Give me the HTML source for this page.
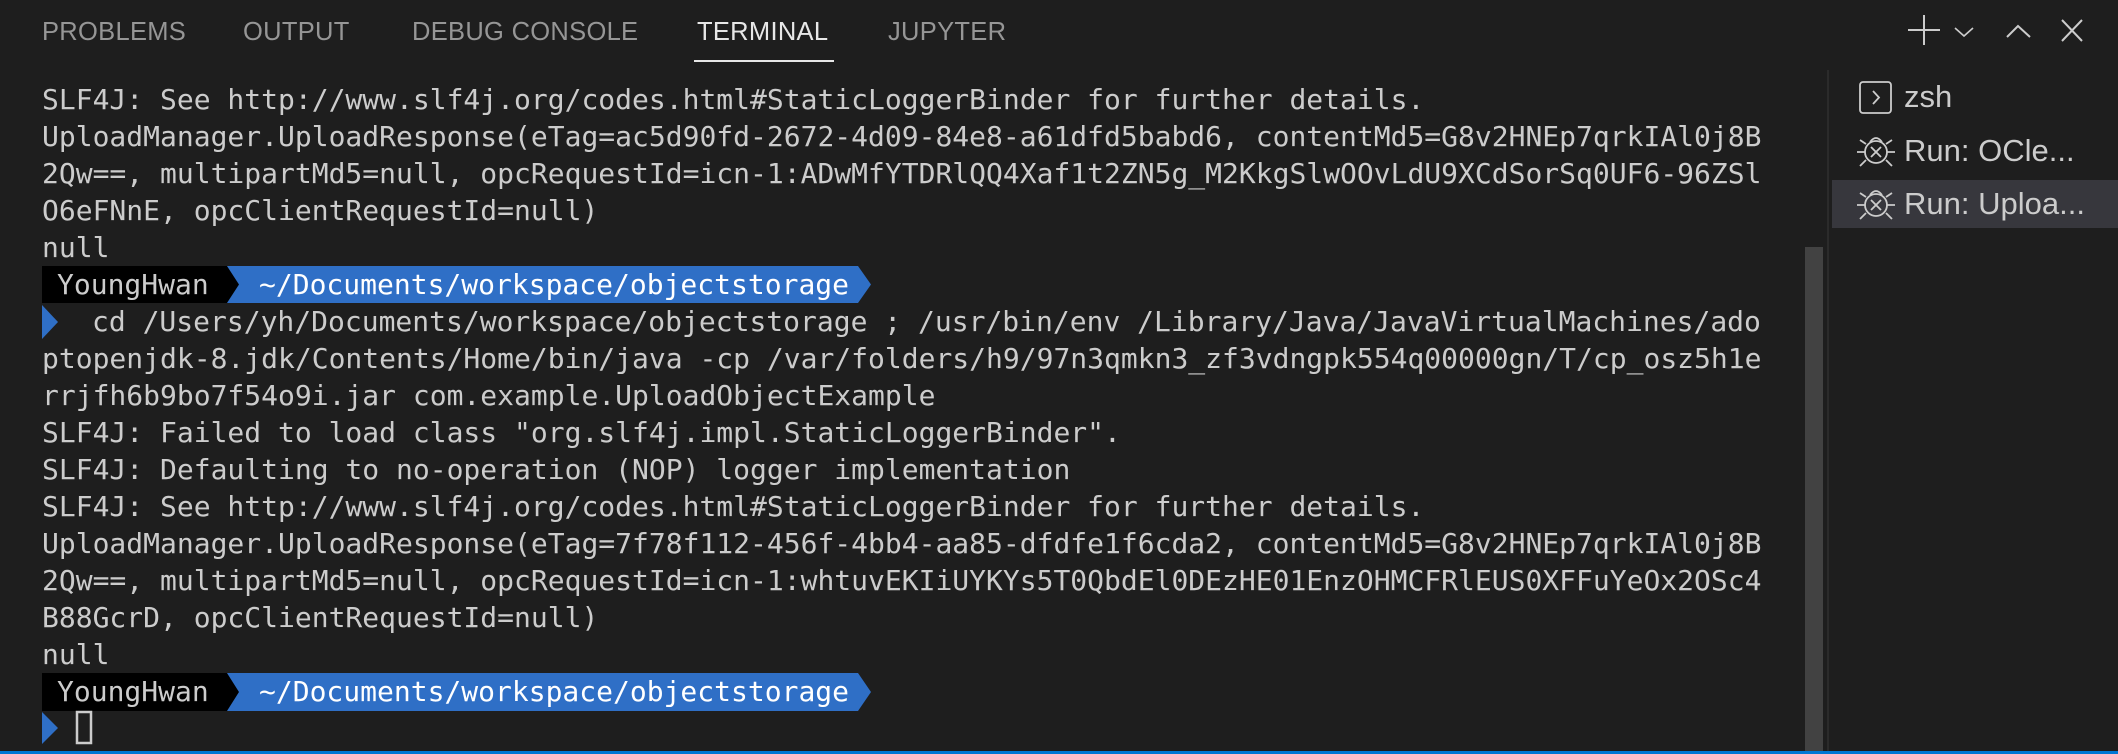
<!DOCTYPE html>
<html><head><meta charset="utf-8"><style>
body{margin:0;width:2118px;height:754px;background:#1e1e1e;overflow:hidden;position:relative;font-family:"Liberation Sans",sans-serif}
.tab{position:absolute;top:16px;font-size:25.5px;line-height:32px;color:#969696;letter-spacing:0.3px}
.ln{position:absolute;left:42px;white-space:pre;font-family:"DejaVu Sans Mono",monospace;font-size:28px;letter-spacing:0;color:#cccccc;line-height:37px;height:37px}
.side{position:absolute;left:1904px;font-size:31px;line-height:40px;color:#cccccc}
</style></head><body>
<div class="tab" style="left:42px">PROBLEMS</div>
<div class="tab" style="left:243px">OUTPUT</div>
<div class="tab" style="left:412px">DEBUG CONSOLE</div>
<div class="tab" style="left:697px;color:#e7e7e7">TERMINAL</div>
<div class="tab" style="left:888px">JUPYTER</div>
<div style="position:absolute;left:694px;top:60px;width:140px;height:2px;background:#e7e7e7"></div>

<svg style="position:absolute;left:1900px;top:10px" width="200" height="40" viewBox="1900 10 200 40" fill="none" stroke="#cccccc" stroke-width="2">
<path d="M1924 15V45M1908 30H1940"/>
<path d="M1955 28L1964 36L1973 28" stroke-width="1.6"/>
<path d="M2007 37L2018 26L2030 37"/>
<path d="M2062 20L2082 41M2082 20L2062 41"/>
</svg>

<div class="ln" style="top:81px">SLF4J: See http://www.slf4j.org/codes.html#StaticLoggerBinder for further details.</div>
<div class="ln" style="top:118px">UploadManager.UploadResponse(eTag=ac5d90fd-2672-4d09-84e8-a61dfd5babd6, contentMd5=G8v2HNEp7qrkIAl0j8B</div>
<div class="ln" style="top:155px">2Qw==, multipartMd5=null, opcRequestId=icn-1:ADwMfYTDRlQQ4Xaf1t2ZN5g_M2KkgSlwOOvLdU9XCdSorSq0UF6-96ZSl</div>
<div class="ln" style="top:192px">O6eFNnE, opcClientRequestId=null)</div>
<div class="ln" style="top:229px">null</div>

<svg style="position:absolute;left:42px;top:266px" width="840" height="37"><polygon points="0,0 185,0 197,18.5 185,37 0,37" fill="#000"/><polygon points="185,0 816,0 829,18.5 816,37 185,37 197,18.5" fill="#2f6fc6"/></svg>
<div class="ln" style="top:266px;left:57px">YoungHwan</div>
<div class="ln" style="top:266px;left:259px;color:#fff">~/Documents/workspace/objectstorage</div>

<svg style="position:absolute;left:42px;top:305px" width="18" height="34"><polygon points="0,0 16,17 0,34" fill="#2f6fc6"/></svg>
<div class="ln" style="top:303px;left:92px">cd /Users/yh/Documents/workspace/objectstorage ; /usr/bin/env /Library/Java/JavaVirtualMachines/ado</div>
<div class="ln" style="top:340px">ptopenjdk-8.jdk/Contents/Home/bin/java -cp /var/folders/h9/97n3qmkn3_zf3vdngpk554q00000gn/T/cp_osz5h1e</div>
<div class="ln" style="top:377px">rrjfh6b9bo7f54o9i.jar com.example.UploadObjectExample</div>
<div class="ln" style="top:414px">SLF4J: Failed to load class "org.slf4j.impl.StaticLoggerBinder".</div>
<div class="ln" style="top:451px">SLF4J: Defaulting to no-operation (NOP) logger implementation</div>
<div class="ln" style="top:488px">SLF4J: See http://www.slf4j.org/codes.html#StaticLoggerBinder for further details.</div>
<div class="ln" style="top:525px">UploadManager.UploadResponse(eTag=7f78f112-456f-4bb4-aa85-dfdfe1f6cda2, contentMd5=G8v2HNEp7qrkIAl0j8B</div>
<div class="ln" style="top:562px">2Qw==, multipartMd5=null, opcRequestId=icn-1:whtuvEKIiUYKYs5T0QbdEl0DEzHE01EnzOHMCFRlEUS0XFFuYeOx2OSc4</div>
<div class="ln" style="top:599px">B88GcrD, opcClientRequestId=null)</div>
<div class="ln" style="top:636px">null</div>

<svg style="position:absolute;left:42px;top:673px" width="840" height="38"><polygon points="0,0 185,0 197,19 185,38 0,38" fill="#000"/><polygon points="185,0 816,0 829,19 816,38 185,38 197,19" fill="#2f6fc6"/></svg>
<div class="ln" style="top:673px;left:57px">YoungHwan</div>
<div class="ln" style="top:673px;left:259px;color:#fff">~/Documents/workspace/objectstorage</div>
<svg style="position:absolute;left:42px;top:710px" width="60" height="36"><polygon points="0,2 16,18 0,34" fill="#2f6fc6"/><rect x="35" y="2" width="14" height="31" fill="none" stroke="#cccccc" stroke-width="2.5"/></svg>

<div style="position:absolute;left:1805px;top:247px;width:18px;height:504px;background:#424242"></div>
<div style="position:absolute;left:1827px;top:70px;width:2px;height:681px;background:#2b2b2b"></div>
<div style="position:absolute;left:1832px;top:180px;width:286px;height:48px;background:#37373d"></div>

<svg style="position:absolute;left:1856px;top:80px" width="42" height="150" fill="none" stroke="#cccccc" stroke-width="1.8">
<rect x="4" y="2" width="31" height="31" rx="3"/><path d="M17 11L23 17.5L17 24"/>
<g transform="translate(0,51)"><ellipse cx="20" cy="21" rx="11" ry="11"/><path d="M14 11Q20 3 26 11M1 21H9M31 21H39M4 9L10 13M36 9L30 13M4 35L10 29M36 35L30 29M15 16L25 26M25 16L15 26"/></g>
<g transform="translate(0,104)"><ellipse cx="20" cy="21" rx="11" ry="11"/><path d="M14 11Q20 3 26 11M1 21H9M31 21H39M4 9L10 13M36 9L30 13M4 35L10 29M36 35L30 29M15 16L25 26M25 16L15 26"/></g>
</svg>
<div class="side" style="top:77px">zsh</div>
<div class="side" style="top:131px">Run: OCle...</div>
<div class="side" style="top:184px">Run: Uploa...</div>

<div style="position:absolute;left:0;top:751px;width:2118px;height:3px;background:#0078d4"></div>
</body></html>
